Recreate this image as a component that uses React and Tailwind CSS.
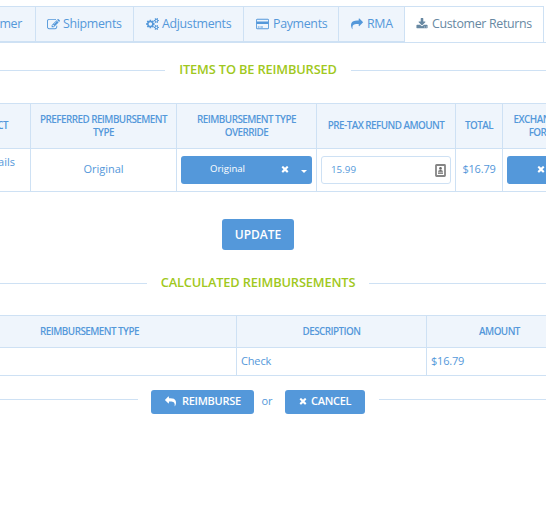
import React from "react";

const PATHS = {
  edit: "M888 1184l116-116-152-152-116 116v56h96v96h56zm440-720q-16-16-33 1l-350 350q-17 17-1 33t33-1l350-350q17-17 1-33zm80 594v190q0 119-84.5 203.5t-203.5 84.5h-832q-119 0-203.5-84.5t-84.5-203.5v-832q0-119 84.5-203.5t203.5-84.5h832q63 0 117 25 15 7 18 23 3 17-9 29l-49 49q-14 14-32 8-23-6-45-6h-832q-66 0-113 47t-47 113v832q0 66 47 113t113 47h832q66 0 113-47t47-113v-126q0-13 9-22l64-64q15-15 35-7t20 29zm-96-738l288 288-672 672h-288v-288zm444 132l-92 92-288-288 92-92q28-28 68-28t68 28l152 152q28 28 28 68t-28 68z",
  cogs: "M896 896q0-106-75-181t-181-75-181 75-75 181 75 181 181 75 181-75 75-181zm768 512q0-52-38-90t-90-38-90 38-38 90q0 53 37.5 90.5t90.5 37.5 90.5-37.5 37.5-90.5zm0-1024q0-52-38-90t-90-38-90 38-38 90q0 53 37.5 90.5t90.5 37.5 90.5-37.5 37.5-90.5zm-384 421v185q0 10-7 19.5t-16 10.5l-155 24q-11 35-32 76 34 48 90 115 7 11 7 20 0 12-7 19-23 30-82.5 89.5t-78.5 59.5q-11 0-21-7l-115-90q-37 19-77 31-11 108-23 155-7 24-30 24h-186q-11 0-20-7.5t-10-17.5l-23-153q-34-10-75-31l-118 89q-7 7-20 7-11 0-21-8-144-133-144-160 0-9 7-19 10-14 41-53t47-61q-23-44-35-82l-152-24q-10-1-17-9.5t-7-19.5v-185q0-10 7-19.5t16-10.5l155-24q11-35 32-76-34-48-90-115-7-11-7-20 0-12 7-20 22-30 82-89t79-59q11 0 21 7l115 90q34-18 77-32 11-108 23-154 7-24 30-24h186q11 0 20 7.5t10 17.5l23 153q34 10 75 31l118-89q8-7 20-7 11 0 21 8 144 133 144 160 0 8-7 19-12 16-42 54t-45 60q23 48 34 82l152 23q10 2 17 10.5t7 19.5zm640 533v140q0 16-149 31-12 27-30 52 51 113 51 138 0 4-4 7-122 71-124 71-8 0-46-47t-52-68q-20 2-30 2t-30-2q-14 21-52 68t-46 47q-2 0-124-71-4-3-4-7 0-25 51-138-18-25-30-52-149-15-149-31v-140q0-16 149-31 13-29 30-52-51-113-51-138 0-4 4-7 4-2 35-20t59-34 30-16q8 0 46 46.5t52 67.5q20-2 30-2t30 2q51-71 92-112l6-2q4 0 124 70 4 3 4 7 0 25-51 138 17 23 30 52 149 15 149 31zm0-1024v140q0 16-149 31-12 27-30 52 51 113 51 138 0 4-4 7-122 71-124 71-8 0-46-47t-52-68q-20 2-30 2t-30-2q-14 21-52 68t-46 47q-2 0-124-71-4-3-4-7 0-25 51-138-18-25-30-52-149-15-149-31v-140q0-16 149-31 13-29 30-52-51-113-51-138 0-4 4-7 4-2 35-20t59-34 30-16q8 0 46 46.5t52 67.5q20-2 30-2t30 2q51-71 92-112l6-2q4 0 124 70 4 3 4 7 0 25-51 138 17 23 30 52 149 15 149 31z",
  card: "M1760 128q66 0 113 47t47 113v1216q0 66-47 113t-113 47h-1600q-66 0-113-47t-47-113v-1216q0-66 47-113t113-47h1600zm-1600 128q-13 0-22.5 9.5t-9.5 22.5v224h1664v-224q0-13-9.5-22.5t-22.5-9.5h-1600zm1600 1280q13 0 22.5-9.5t9.5-22.5v-608h-1664v608q0 13 9.5 22.5t22.5 9.5h1600zm-1504-128v-128h256v128h-256zm384 0v-128h384v128h-384z",
  share: "M1792 640q0 26-19 45l-512 512q-19 19-45 19t-45-19-19-45v-256h-224q-98 0-175.5 6t-154 21.5-133 42.5-105.5 69.5-80 101-48.5 138.5-17.5 181q0 55 5 123 0 6 2.5 23.5t2.5 26.5q0 15-8.5 25t-23.5 10q-16 0-28-17-7-9-13-22t-13.5-30-10.5-24q-127-285-127-451 0-199 53-333 162-403 875-403h224v-256q0-26 19-45t45-19 45 19l512 512q19 19 19 45z",
  download: "M1344 1344q0-26-19-45t-45-19-45 19-19 45 19 45 45 19 45-19 19-45zm256 0q0-26-19-45t-45-19-45 19-19 45 19 45 45 19 45-19 19-45zm128-224v320q0 40-28 68t-68 28h-1472q-40 0-68-28t-28-68v-320q0-40 28-68t68-28h465l135 136q58 56 136 56t136-56l136-136h464q40 0 68 28t28 68zm-325-569q17 41-14 70l-448 448q-18 19-45 19t-45-19l-448-448q-31-29-14-70 17-39 59-39h256v-448q0-26 19-45t45-19h256q26 0 45 19t19 45v448h256q42 0 59 39z",
  times: "M1490 1322q0 40-28 68l-136 136q-28 28-68 28t-68-28l-294-294-294 294q-28 28-68 28t-68-28l-136-136q-28-28-28-68t28-68l294-294-294-294q-28-28-28-68t28-68l136-136q28-28 68-28t68 28l294 294 294-294q28-28 68-28t68 28l136 136q28 28 28 68t-28 68l-294 294 294 294q28 28 28 68z",
};

function Icon({ name, box = "0 0 1792 1792", className = "" }) {
  return (
    <svg viewBox={box} fill="currentColor" className={`shrink-0 ${className}`}>
      <path d={PATHS[name]} />
    </svg>
  );
}

function Tab({ width, icon, box, iconClass, children }) {
  return (
    <div className={`flex h-[37px] shrink-0 items-center border-t border-r border-b-2 border-[#cee1f4] bg-[#eff5fc] text-[12.4px] tracking-[-0.32px] ${width}`}>
      {icon && <Icon name={icon} box={box} className={iconClass} />}
      {children}
    </div>
  );
}

function Legend({ left, gap, children }) {
  return (
    <div className="flex h-5 items-center">
      <div className={`h-px bg-[#cee1f4] ${left}`} />
      <div className={`shrink-0 text-center text-[12.8px] font-semibold tracking-[-0.14px] text-[#9fc820] ${gap}`}>{children}</div>
      <div className="h-px flex-1 bg-[#cee1f4]" />
    </div>
  );
}

function Th({ className = "", children }) {
  return (
    <div className={`flex items-center justify-center border-r border-[#cee1f4] text-center text-[9.9px] leading-[13px] font-semibold tracking-[-0.54px] ${className}`}>
      {children}
    </div>
  );
}

function Td({ className = "", children }) {
  return <div className={`flex items-center border-r border-[#cee1f4] text-[11px] ${className}`}>{children}</div>;
}

export default function App() {
  return (
    <div className="h-[506px] w-[546px] overflow-hidden bg-white pt-[6px] font-['Open_Sans',sans-serif] whitespace-nowrap text-[#5498da]">
      <nav className="flex h-[37px] w-[546px]">
        <Tab width="w-[36px] justify-end pr-[13px]">mer</Tab>
        <Tab width="w-[98px] pl-[11px]" icon="edit" iconClass="mr-[3px] h-[13px] w-[13px]">Shipments</Tab>
        <Tab width="w-[110px] pl-[12px]" icon="cogs" box="0 0 1920 1792" iconClass="mr-[3px] h-[12px] w-[13px]">Adjustments</Tab>
        <Tab width="w-[95px] pl-[12px]" icon="card" box="0 0 1920 1792" iconClass="mr-[4px] h-[12px] w-[13px]">Payments</Tab>
        <Tab width="w-[66px] pl-[12px]" icon="share" iconClass="mr-[4px] h-[12px] w-[12px]">RMA</Tab>
        <div className="flex h-[37px] w-[139px] shrink-0 items-center border-t border-r border-b border-[#cee1f4] pb-px pl-[11px] text-[12.4px] tracking-[-0.32px] text-[#6788a2]">
          <Icon name="download" className="mr-[4px] h-[12px] w-[12px]" />
          Customer Returns
        </div>
        <div className="h-[37px] flex-1 border-b border-[#cee1f4]" />
      </nav>

      <div className="mt-[17px]">
        <Legend left="w-[165px]" gap="w-[186px]">ITEMS TO BE REIMBURSED</Legend>
      </div>

      <section className="mt-[23px] w-[573px] border-y border-[#cee1f4]">
        <div className="flex h-[45px] border-b border-[#cee1f4] bg-[#eff5fc]">
          <Th className="w-[31px] justify-end pr-[22px] pb-px">CT</Th>
          <Th className="w-[146px]">PREFERRED REIMBURSEMENT<br />TYPE</Th>
          <Th className="w-[140px]">REIMBURSEMENT TYPE<br />OVERRIDE</Th>
          <Th className="w-[139px] pb-px">PRE-TAX REFUND AMOUNT</Th>
          <Th className="w-[47px] pb-px">TOTAL</Th>
          <Th className="w-[70px]">EXCHANGE<br />FOR</Th>
        </div>
        <div className="flex h-[42px]">
          <Td className="w-[31px] justify-end pr-[15px] pb-[15px]">ails</Td>
          <Td className="w-[146px] justify-center pb-px">Original</Td>
          <Td className="w-[140px] pl-1">
            <div className="flex h-7 w-[131px] items-center rounded-[3px] bg-[#5498da] text-[9.6px] text-white">
              <span className="w-[93px] pb-px text-center">Original</span>
              <Icon name="times" className="mb-[2px] ml-[6px] h-[10px] w-[10px]" />
              <svg viewBox="0 0 6 3" className="mt-[2px] ml-[11px] h-[3px] w-[6px]" fill="currentColor"><path d="M0 0h6L3 3z" /></svg>
            </div>
          </Td>
          <Td className="w-[139px] pl-1">
            <div className="flex h-7 w-[130px] items-center justify-between rounded-[3px] border border-[#cee1f4] pr-1 pl-[9px] text-[9.8px]">
              <span>15.99</span>
              <svg viewBox="0 0 11 13" className="h-[13px] w-[11px]">
                <rect x="1" y="1" width="9" height="11" rx="0.5" fill="#fff" stroke="#858585" strokeWidth="1.8" />
                <circle cx="5.5" cy="4.4" r="1.3" fill="#666" />
                <path d="M3 7.8q0-1.8 2.5-1.8t2.5 1.8zM3 8.6h5v1.2H3z" fill="#666" />
              </svg>
            </div>
          </Td>
          <Td className="w-[47px] justify-center pb-px tracking-[-0.2px]">$16.79</Td>
          <Td className="w-[70px] pl-1">
            <div className="flex h-7 w-[62px] items-center rounded-[3px] bg-[#5498da] pl-[29px] text-white">
              <Icon name="times" className="mb-[2px] h-[10px] w-[10px]" />
            </div>
          </Td>
        </div>
      </section>

      <div className="mt-[27px] flex pl-[222px]">
        <button className="h-[31px] w-[72px] rounded-[3px] bg-[#5498da] text-[12px] font-semibold text-white">UPDATE</button>
      </div>

      <div className="mt-[23px]">
        <Legend left="w-[147px]" gap="w-[222px]">CALCULATED REIMBURSEMENTS</Legend>
      </div>

      <section className="mt-[22px] w-[573px] border-y border-[#cee1f4]">
        <div className="flex h-[32px] border-b border-[#cee1f4] bg-[#eff5fc]">
          <Th className="w-[237px] pr-[57px]">REIMBURSEMENT TYPE</Th>
          <Th className="w-[190px]">DESCRIPTION</Th>
          <Th className="w-[146px]">AMOUNT</Th>
        </div>
        <div className="flex h-[27px]">
          <Td className="w-[237px]" />
          <Td className="w-[190px] pl-1 tracking-[-0.15px]">Check</Td>
          <Td className="w-[146px] pl-1 tracking-[-0.2px]">$16.79</Td>
        </div>
      </section>

      <div className="mt-[14px] flex items-start">
        <div className="mt-[9px] h-px w-[138px] bg-[#cee1f4]" />
        <button className="ml-[13px] flex h-6 w-[103px] items-center rounded-[3px] bg-[#5498da] pb-[2px] pl-[14px] text-[11px] font-semibold tracking-[-0.28px] text-white">
          <Icon name="share" className="mr-[6px] h-[11px] w-[11px] -scale-x-100" />
          REIMBURSE
        </button>
        <span className="w-[31px] pr-[5px] text-center text-[11px] leading-[22px]">or</span>
        <button className="flex h-6 w-[80px] items-center rounded-[3px] bg-[#5498da] pb-[2px] pl-[13px] text-[11px] font-semibold tracking-[-0.28px] text-white">
          <Icon name="times" className="mr-[3px] h-[10px] w-[10px]" />
          CANCEL
        </button>
        <div className="mt-[9px] ml-[14px] h-px flex-1 bg-[#cee1f4]" />
      </div>
    </div>
  );
}
